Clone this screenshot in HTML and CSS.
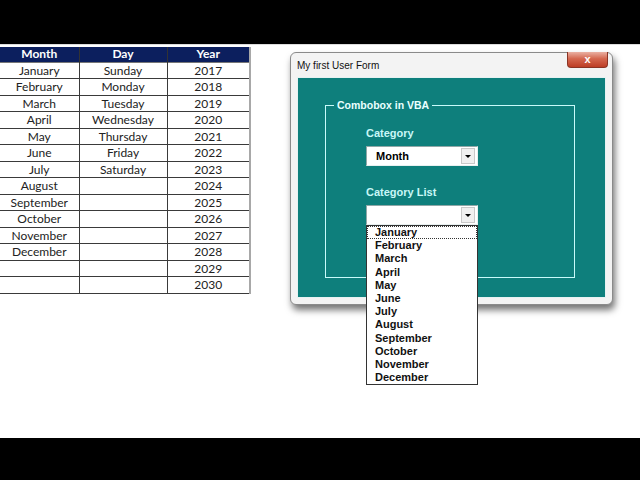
FILE: index.html
```html
<!DOCTYPE html>
<html lang="en">
<head>
  <meta charset="UTF-8">
  <title>Combobox in VBA</title>
  <link rel="stylesheet" href="styles.css">
</head>
<body>
  <div class="bar"></div>

  <div class="main">
    <!-- Worksheet data -->
    <table class="sheet">
      <thead>
        <tr><th>Month</th><th>Day</th><th>Year</th></tr>
      </thead>
      <tbody>
        <tr><td>January</td><td>Sunday</td><td>2017</td></tr>
        <tr><td>February</td><td>Monday</td><td>2018</td></tr>
        <tr><td>March</td><td>Tuesday</td><td>2019</td></tr>
        <tr><td>April</td><td>Wednesday</td><td>2020</td></tr>
        <tr><td>May</td><td>Thursday</td><td>2021</td></tr>
        <tr><td>June</td><td>Friday</td><td>2022</td></tr>
        <tr><td>July</td><td>Saturday</td><td>2023</td></tr>
        <tr><td>August</td><td></td><td>2024</td></tr>
        <tr><td>September</td><td></td><td>2025</td></tr>
        <tr><td>October</td><td></td><td>2026</td></tr>
        <tr><td>November</td><td></td><td>2027</td></tr>
        <tr><td>December</td><td></td><td>2028</td></tr>
        <tr><td></td><td></td><td>2029</td></tr>
        <tr><td></td><td></td><td>2030</td></tr>
      </tbody>
    </table>

    <!-- User form -->
    <div class="window">
      <div class="titlebar">
        <span class="title">My first User Form</span>
        <span class="close">x</span>
      </div>
      <div class="client">
        <div class="frame">
          <span class="frame-caption">Combobox in VBA</span>

          <label class="field-label">Category</label>
          <div class="combo">
            <span class="combo-text">Month</span>
            <span class="combo-btn"><span class="arrow"></span></span>
          </div>

          <label class="field-label second">Category List</label>
          <div class="combo">
            <span class="combo-text"></span>
            <span class="combo-btn"><span class="arrow"></span></span>

            <ul class="droplist">
              <li class="focus">January</li>
              <li>February</li>
              <li>March</li>
              <li>April</li>
              <li>May</li>
              <li>June</li>
              <li>July</li>
              <li>August</li>
              <li>September</li>
              <li>October</li>
              <li>November</li>
              <li>December</li>
            </ul>
          </div>
        </div>
      </div>
    </div>
  </div>

  <div class="bar bottom"></div>
</body>
</html>
```

FILE: styles.css
```css
* {
  box-sizing: border-box;
}

body {
  margin: 0;
  padding: 0;
  width: 640px;
  height: 480px;
  display: flex;
  flex-direction: column;
  background: #fff;
  overflow: hidden;
}

.bar {
  height: 44px;
  background: #000;
  flex: none;
}

.bar.bottom {
  height: 42px;
}

.main {
  flex: 1;
  display: flex;
  align-items: flex-start;
  border-top: 1px solid #dcdcdc;
}

/* Worksheet */
.sheet {
  margin-top: 2px;
  border-collapse: collapse;
  font-family: Lato, 'Liberation Sans', sans-serif;
  font-size: 12px;
  color: #222;
  border-right: 2px solid #a8a8a8;
}

.sheet th {
  background: #0c1f5e;
  color: #fff;
  font-weight: bold;
  height: 15px;
  padding: 0;
  line-height: 14px;
  border-left: 1px solid #333;
}

.sheet td {
  height: 16.5px;
  padding: 0;
  text-align: center;
  line-height: 15px;
  border: 1px solid #3a3a3a;
  border-top-color: #777;
}

.sheet th:first-child,
.sheet td:first-child {
  width: 79px;
  border-left: none;
}

.sheet th:nth-child(2),
.sheet td:nth-child(2) {
  width: 88px;
}

.sheet th:nth-child(3),
.sheet td:nth-child(3) {
  width: 83px;
}

/* User form window */
.window {
  margin-left: 39px;
  margin-top: 7px;
  width: 323px;
  height: 253px;
  background: #f3f3f3;
  border: 1px solid #8a8a8a;
  border-radius: 6px;
  box-shadow: 2px 5px 7px rgba(0, 0, 0, 0.55);
  display: flex;
  flex-direction: column;
  position: relative;
}

.titlebar {
  height: 24px;
  flex: none;
  display: flex;
  align-items: center;
  padding-left: 6px;
  font-family: 'Liberation Sans', sans-serif;
  font-size: 10px;
  color: #111;
}

.close {
  position: absolute;
  top: -1px;
  right: 4px;
  width: 41px;
  height: 16px;
  border: 1px solid #8a3424;
  border-top: none;
  border-radius: 0 0 4px 4px;
  background: linear-gradient(#eab0a2, #d4674f 45%, #bd3d25);
  color: #fff;
  font-family: 'Liberation Sans', sans-serif;
  font-weight: bold;
  font-size: 11px;
  line-height: 14px;
  text-align: center;
}

.client {
  flex: 1;
  margin: 0 6px 6px 6px;
  background: #0e7f7c;
  border: 1px solid #e6f2f2;
  padding: 27px 0 0 27px;
}

.frame {
  position: relative;
  width: 250px;
  height: 173px;
  border: 1px solid #c8fafa;
  padding: 20px 0 0 40px;
  font-family: 'Liberation Sans', sans-serif;
  font-weight: bold;
  font-size: 11px;
}

.frame-caption {
  position: absolute;
  top: -8px;
  left: 8px;
  padding: 0 3px;
  background: #0e7f7c;
  color: #eaffff;
  line-height: 14px;
  font-size: 10.5px;
}

.field-label {
  display: block;
  color: #c9f7f7;
  line-height: 14px;
  margin-bottom: 6px;
}

.field-label.second {
  margin-top: 19px;
}

.combo {
  position: relative;
  width: 112px;
  height: 20px;
  background: #fff;
  border: 1px solid #8fa7a7;
  border-right-color: #e8f0f0;
  border-bottom-color: #e8f0f0;
  display: flex;
  align-items: center;
}

.combo-text {
  flex: 1;
  padding-left: 9px;
  color: #000;
}

.combo-btn {
  width: 14px;
  height: 16px;
  margin-right: 2px;
  background: #f0f0f0;
  border: 1px solid #c9c9c9;
  display: flex;
  align-items: center;
  justify-content: center;
}

.arrow {
  width: 0;
  height: 0;
  border-left: 3px solid transparent;
  border-right: 3px solid transparent;
  border-top: 3px solid #000;
}

/* Open drop-down list */
.droplist {
  position: absolute;
  top: 19px;
  left: -1px;
  width: 112px;
  margin: 0;
  padding: 0;
  list-style: none;
  background: #fff;
  border: 1px solid #333;
}

.droplist li {
  height: 13.2px;
  line-height: 13px;
  padding-left: 8px;
  color: #111;
}

.droplist li.focus {
  outline: 1px dotted #333;
  outline-offset: -1px;
}
```
